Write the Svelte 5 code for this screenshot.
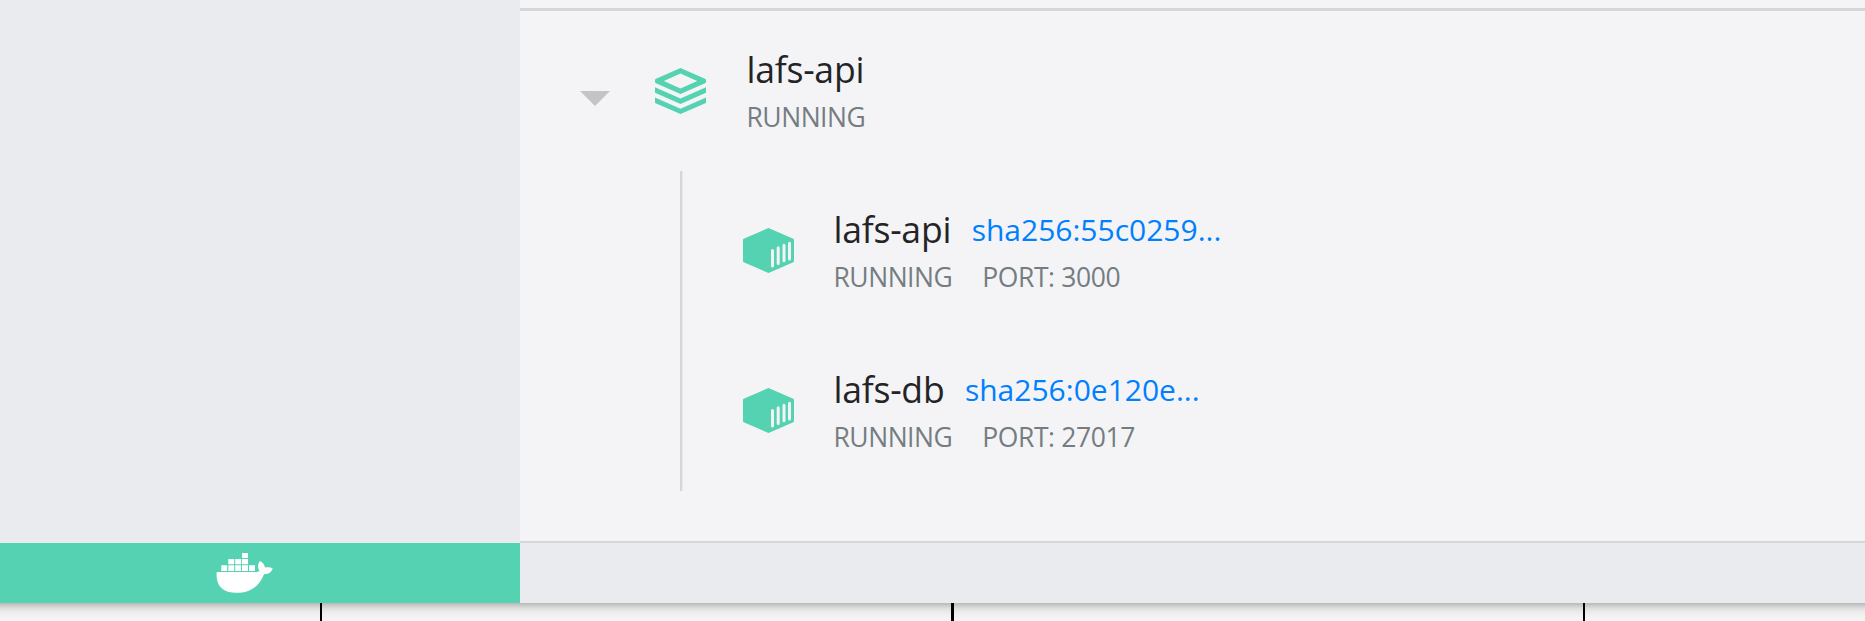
<script>
  const containers = [
    { name: 'lafs-api', image: 'sha256:55c0259...', port: '3000' },
    { name: 'lafs-db', image: 'sha256:0e120e...', port: '27017' }
  ];
</script>

<div class="window">
  <div class="main">
    <aside></aside>
    <section>
      <div class="rule"></div>
      <div class="app">
        <svg class="arrow" viewBox="0 0 30 15"><path d="M0 0H30L15 15Z" fill="#c4c4c4" /></svg>
        <svg class="stack" viewBox="0 0 51 46">
          <g fill="#55d2b2">
            <path fill-rule="evenodd" d="M25.5 0 50 10.7Q51 11.2 51 12V14Q51 14.8 50 15.3L25.5 26 1 15.3Q0 14.8 0 14V12Q0 11.2 1 10.7ZM25.5 5.6 8.8 13 25.5 20.4 42.2 13Z" />
            <path d="M0 19.3 25.5 30.5 51 19.3V24.8L25.5 36 0 24.8Z" />
            <path d="M0 29.6 25.5 40.8 51 29.6V35L25.5 46 0 35Z" />
          </g>
        </svg>
        <div class="info">
          <div class="title">lafs-api</div>
          <div class="status">RUNNING</div>
        </div>
      </div>
      <div class="children">
        {#each containers as c}
          <div class="container">
            <svg class="cube" viewBox="0 0 51 45">
              <path d="M25.5 0 50.3 10.8Q51 11.2 51 12V33Q51 33.8 50.3 34.2L25.5 45 .7 34.2Q0 33.8 0 33V12Q0 11.2 .7 10.8Z" fill="#55d2b2" />
              <g stroke="#f4f4f6" stroke-width="3" stroke-linecap="round">
                <path d="M29.5 22.5V38M35.2 19.7V35.4M41 17.2V32.8M46.5 15.3V31" />
              </g>
            </svg>
            <div class="info">
              <div class="title">{c.name}<span class="link">{c.image}</span></div>
              <div class="status">RUNNING<span class="port">PORT: {c.port}</span></div>
            </div>
          </div>
        {/each}
      </div>
    </section>
  </div>
  <footer>
    <div class="brand">
      <svg class="whale" viewBox="0 0 57 40" fill="#fff">
        <path d="M26 0h6v5h-6zM12.3 6h5.9v5.3h-5.9zM19.2 6h5.9v5.3h-5.9zM26 6h6v5.3h-6zM5.3 12.3h5.9V18H5.3zM12.3 12.3h5.9V18h-5.9zM19.2 12.3h5.9V18h-5.9zM26 12.3h6V18h-6zM33 12.3h6V18h-6z" />
        <path d="M1.6 19H39C41 19 42.7 18.6 43.5 17.8 41.2 14.6 41.9 10.8 44 8 46.8 9.4 48.7 11.6 48.9 14.6 51.7 13.8 54.5 14.1 56.7 15.5 55.5 19.3 52 21.3 48 21.2 43.6 33 34.3 39.8 20.5 39.8 7.6 39.8.5 34.3.5 20.8.5 19.5.8 19 1.6 19Z" />
      </svg>
    </div>
    <div class="rest"></div>
  </footer>
</div>
<div class="desk"><i></i><i class="wide"></i><i></i></div>

<style>
  :global(body) { overflow: hidden; background: #f5f5f5; font-family: "Open Sans", sans-serif; }
  .window { height: 603px; display: flex; flex-direction: column; background: #f4f4f6; }
  .main { display: flex; height: 543px; }
  aside { width: 520px; background: #e9ebee; }
  section { flex: 1; box-sizing: border-box; padding-top: 8px; border-bottom: 2px solid #d6d6d8; }
  .rule { height: 3px; background: #d6d6d8; }
  .app { display: flex; height: 160px; padding-left: 60px; }
  svg { display: block; flex: none; }
  .arrow { width: 30px; height: 15px; margin-top: 80px; }
  .stack { width: 51px; height: 46px; margin: 56.5px 0 0 45px; }
  .info { margin: 33px 0 0 40.5px; white-space: nowrap; }
  .title { height: 50px; line-height: 50px; font-size: 35.6px; letter-spacing: -.25px; color: #242426; }
  .status { height: 36px; line-height: 36px; font-size: 26.5px; letter-spacing: -.5px; color: #757d82; margin-top: 5px; }
  .link { position: relative; top: -2px; font-size: 30px; letter-spacing: 0; color: #007fff; margin-left: 20.5px; }
  .port { margin-left: 30px; letter-spacing: -.4px; }
  .children { margin-left: 160px; height: 320px; border-left: 2px solid #d6d6d8; box-shadow: inset 1px 0 #e9e9eb; }
  .container { display: flex; height: 160px; padding-left: 61px; }
  .cube { width: 51px; height: 45px; margin-top: 57px; }
  .container .info { margin-left: 39.5px; }
  footer { display: flex; height: 60px; }
  .brand { width: 520px; background: #55d2b2; }
  .whale { width: 57px; height: 40px; margin: 10px 0 0 216px; }
  .rest { flex: 1; background: #e9ebee; }
  .desk { display: flex; gap: 629px; height: 18px; padding-left: 320px; background: linear-gradient(#b9b9b9, #cecece 3px, #e2e2e2 6px, #eeeeee 10px, #f4f4f4 15px, #f5f5f5); }
  .desk i { width: 2px; flex: none; background: #000; }
  .desk .wide { width: 3px; }
</style>
